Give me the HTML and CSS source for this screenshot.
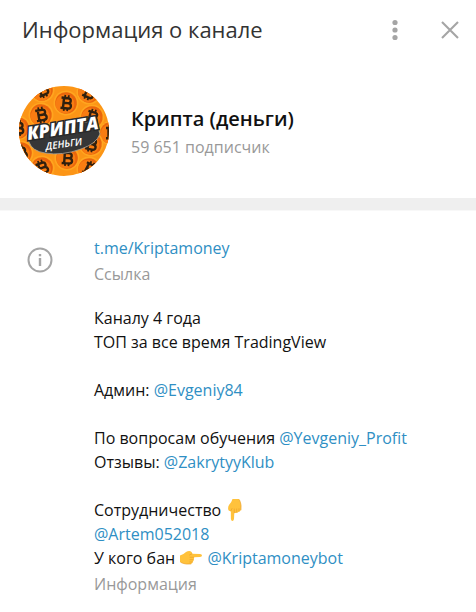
FILE: index.html
```
<!DOCTYPE html>
<html lang="ru">
<head>
<meta charset="utf-8">
<meta name="viewport" content="width=device-width, initial-scale=1">
<title>Информация о канале</title>
<link rel="stylesheet" href="styles.css">
</head>
<body>
<header class="topbar">
  <h1 class="topbar-title">Информация о канале</h1>
  <button class="icon-button" type="button" aria-label="Меню">
    <svg width="24" height="24" viewBox="0 0 24 24" fill="#a5a5a5"><circle cx="12" cy="4.5" r="2.6"/><circle cx="12" cy="12" r="2.6"/><circle cx="12" cy="19.5" r="2.6"/></svg>
  </button>
  <button class="icon-button" type="button" aria-label="Закрыть">
    <svg width="24" height="24" viewBox="0 0 24 24" fill="none" stroke="#a5a5a5" stroke-width="2.1"><path d="M4 4l16 16M20 4L4 20"/></svg>
  </button>
</header>
<section class="profile">
  <svg class="avatar" viewBox="0 0 90 90" role="img" aria-label="Крипта деньги">
    <defs>
      <clipPath id="round"><circle cx="45" cy="45" r="45"/></clipPath>
      <g id="coin">
        <circle r="12.5" fill="#ffa51f"/>
        <circle r="10.8" fill="#ea650c"/>
        <circle cx="-1" cy="1" r="9.5" fill="#f87c12"/>
        <g fill="none" stroke="#30200f" stroke-width="2.4">
          <path d="M-5 -5H1.5Q4.5 -5 4.5 -2.5T1.5 0H-2.5M1.5 0Q5.2 0 5.2 2.7T2 5.3H-5M-2.5 -5V5.3"/>
          <path stroke-width="1.8" d="M-1.5 -8V-5M2 -8V-5M-1.5 5V8M2 5V8"/>
        </g>
      </g>
    </defs>
    <g clip-path="url(#round)">
      <path fill="#fc9516" d="M0 0h90v90H0z"/>
      <use href="#coin" transform="translate(47 17) rotate(6)"/>
      <use href="#coin" transform="translate(22 29) rotate(-10)"/>
      <use href="#coin" transform="translate(23 4) rotate(-25)"/>
      <use href="#coin" transform="translate(70 6) rotate(25)"/>
      <use href="#coin" transform="translate(73 31) rotate(15)"/>
      <use href="#coin" transform="translate(-1 42)"/>
      <use href="#coin" transform="translate(92 47)"/>
      <use href="#coin" transform="translate(2 67) rotate(-12)"/>
      <use href="#coin" transform="translate(72 58) rotate(12)"/>
      <use href="#coin" transform="translate(48 72) rotate(4)"/>
      <use href="#coin" transform="translate(23 82) rotate(-20)"/>
      <use href="#coin" transform="translate(70 83) rotate(28)"/>
      <path fill="#353637" stroke="#a9a49b" stroke-width=".8" d="M8 50L12 42 77 35 81 48Q77 58 62 63 43 70 26 67 13 65 10 56Z"/>
      <text transform="rotate(-9 9 54)" x="9" y="54" font-family="Open Sans, sans-serif" font-style="italic" font-weight="800" font-size="18" fill="#fff" stroke="#292a2b" stroke-width="3" paint-order="stroke">КРИПТА</text>
      <text transform="rotate(-8 27 64)" x="27" y="64" font-family="Open Sans, sans-serif" font-style="italic" font-weight="600" font-size="10" fill="#fff">ДЕНЬГИ</text>
    </g>
  </svg>
  <div class="profile-text">
    <h2 class="profile-name">Крипта (деньги)</h2>
    <p class="muted">59 651 подписчик</p>
  </div>
</section>
<main class="details">
  <svg class="info-icon" viewBox="0 0 26 26" aria-hidden="true"><circle cx="13" cy="13" r="11.5" fill="none" stroke="#a5a5a5" stroke-width="2"/><path fill="#a5a5a5" d="M11.8 7h2.4v2.3h-2.4zM11.8 11h2.4v8h-2.4z"/></svg>
  <div class="details-text">
    <p><a href="#link">t.me/Kriptamoney</a></p>
    <p class="muted label">Ссылка</p>
    <div class="about">
      <p>Каналу 4 года<br>ТОП за все время TradingView</p>
      <p>Админ: <a href="#admin">@Evgeniy84</a></p>
      <p>По вопросам обучения <a href="#profit">@Yevgeniy_Profit</a><br>Отзывы: <a href="#reviews">@ZakrytyyKlub</a></p>
      <p>Сотрудничество <svg class="emoji" viewBox="0 0 22 22" role="img" aria-label="Вниз"><use href="#hand" transform="matrix(0 1 1 0 -2 0)"/></svg><br><a href="#artem">@Artem052018</a><br>У кого бан <svg class="emoji" viewBox="0 0 22 22" role="img" aria-label="Вправо"><g id="hand"><path fill="#ffc23c" d="M0 8.5Q3.5 7.5 6 5 8 3.8 10.5 4.2 12.5 4.8 12 6.8L20 6.9Q22 7.2 22 8.4T20 10L13.8 10.3Q14.5 11.5 13.6 12.6 14 14 12.6 14.9 12.6 16.6 10.8 16.9L6.5 17Q4 16.8 0 15Z"/><path fill="none" stroke="#eda42c" stroke-width=".8" stroke-linecap="round" d="M12 6.8L9.5 8M10 10.3H13.8M10 12.7H13.4M9.8 15H12.4M1 15.5Q4 16.9 6.5 17L10.8 16.9"/></g></svg> <a href="#bot">@Kriptamoneybot</a></p>
    </div>
    <p class="muted label">Информация</p>
  </div>
</main>
</body>
</html>
```
FILE: styles.css
```
* { box-sizing: border-box; }
body {
  margin: 0;
  background: #fff;
  color: #111;
  font: 16px/24px "Open Sans", "Noto Sans", sans-serif;
}
h1, h2, p { margin: 0; }
a { color: #2f8fc4; text-decoration: none; }
.topbar {
  display: flex;
  align-items: center;
  height: 60px;
  padding: 0 10px 2px 22px;
}
.topbar-title {
  flex: 1;
  color: #333;
  font-size: 22px;
  font-weight: 500;
  line-height: 28px;
}
.icon-button {
  display: grid;
  place-items: center;
  width: 32px;
  height: 40px;
  margin: 2px 0 0 23px;
  padding: 0;
  border: 0;
  background: none;
}
.profile {
  display: flex;
  align-items: center;
  gap: 22px;
  padding: 26px 19px 22px;
  border-bottom: 12px solid #efefef;
}
.avatar { flex: none; width: 90px; height: 90px; }
.profile-name {
  font-size: 20px;
  font-weight: 600;
  line-height: 32px;
}
.muted { color: #999; }
.details {
  display: flex;
  gap: 41px;
  padding: 26px 20px 16px 27px;
  box-shadow: inset 0 1px #f8f8f8;
}
.info-icon { flex: none; width: 26px; height: 26px; margin-top: 11px; }
.label { padding-top: 2px; }
.about {
  display: grid;
  gap: 24px;
  padding-top: 20px;
}
.emoji { width: 22px; height: 22px; margin: 0 1px; vertical-align: -5px; }
```
